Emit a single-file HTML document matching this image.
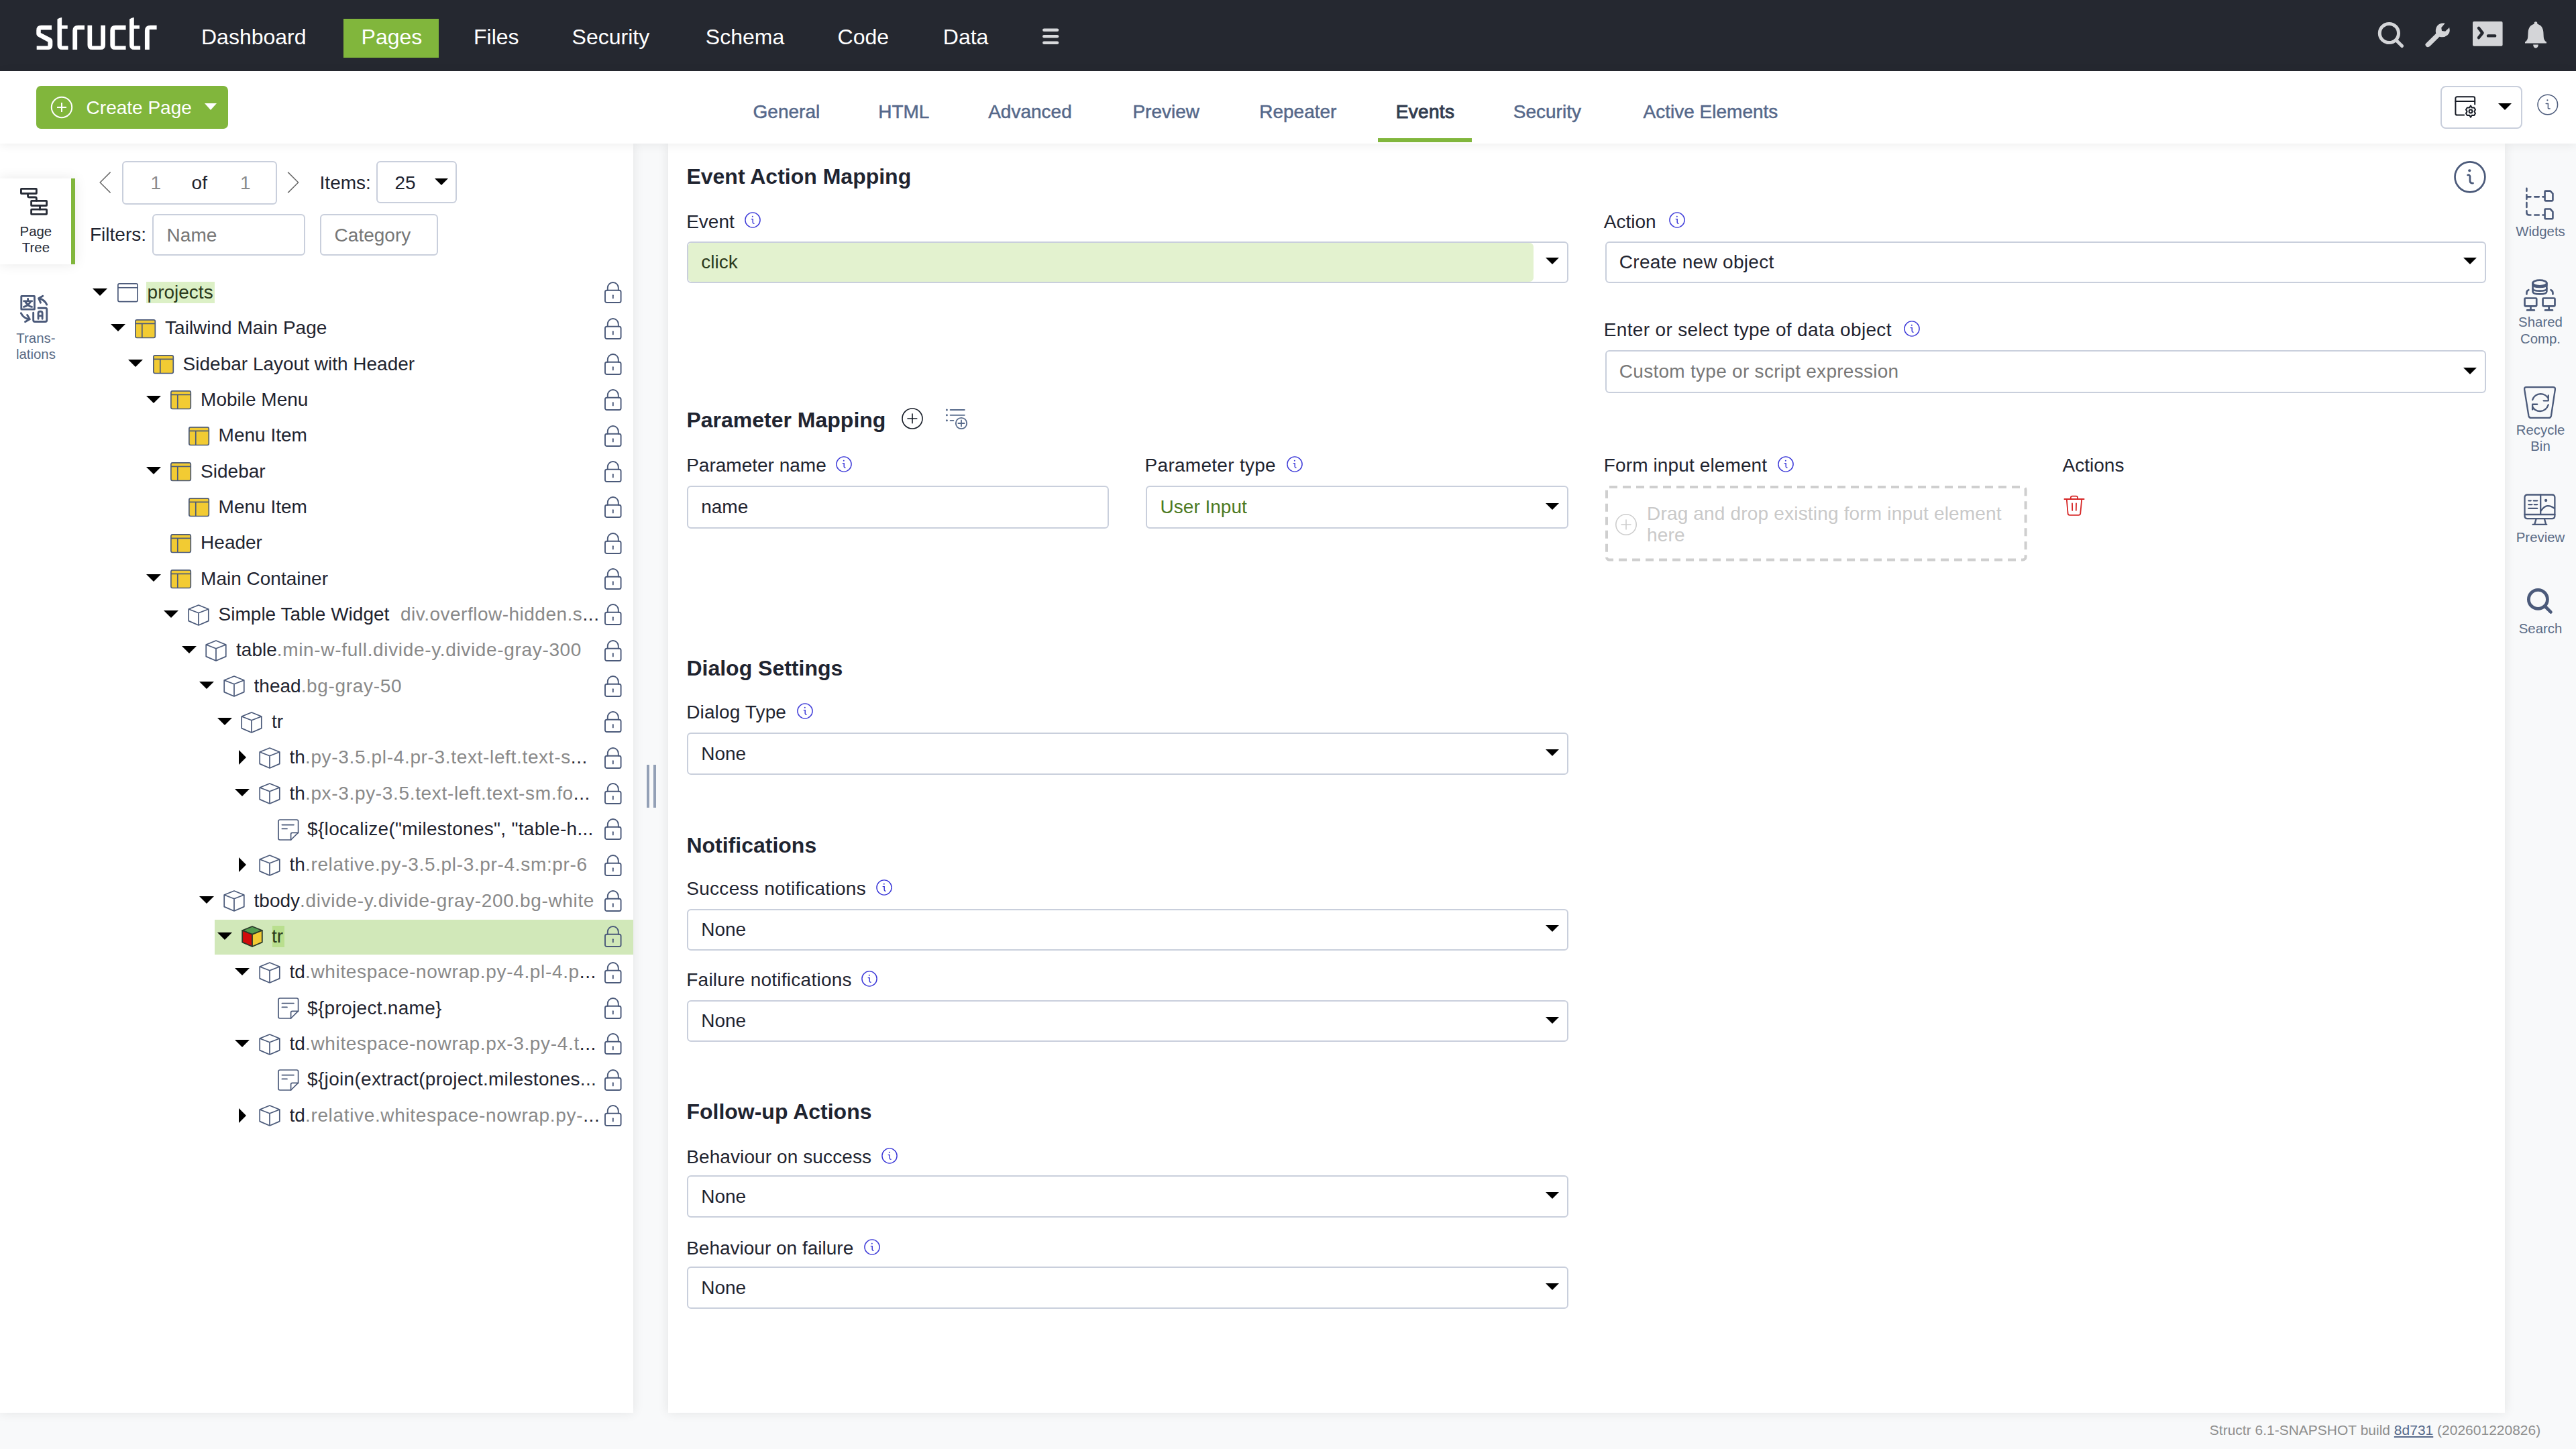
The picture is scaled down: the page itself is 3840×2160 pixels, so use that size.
<!DOCTYPE html>
<html><head><meta charset="utf-8"><style>
*{box-sizing:border-box;margin:0;padding:0}
html,body{width:100%;height:100%;overflow:hidden;background:#f8f9fa}
@media (max-width:2500px){#root{zoom:1!important}}
#root{position:absolute;left:0;top:0;width:1920px;height:1080px;zoom:2;font-family:"Liberation Sans",sans-serif;color:#1f2430;background:#f8f9fa;overflow:hidden}
.a{position:absolute;white-space:nowrap}
svg{position:absolute;overflow:visible}
#hdr{position:absolute;left:0;top:0;width:1920px;height:53px;background:#252830}
.nav{position:absolute;top:14px;height:29px;line-height:27.9px;font-size:16px;color:#fff;padding:0 13.3px}
.nav.act{background:#81b63c}
#sub{position:absolute;left:0;top:53px;width:1920px;height:54px;background:#fff;box-shadow:0 1px 7px rgba(0,0,0,.07);z-index:3}
.tab{position:absolute;top:75px;font-size:14px;color:#55688a;line-height:16px;-webkit-text-stroke:.25px #55688a}
#gap{display:none}
#left{position:absolute;left:0;top:107px;width:472px;height:946px;background:#fff;box-shadow:0 0 8px rgba(0,0,0,.09)}
#main{position:absolute;left:498px;top:107px;width:1369px;height:946px;background:#fff;box-shadow:0 0 8px rgba(0,0,0,.09)}
#rside{display:none}
.lbl{position:absolute;font-size:14px;line-height:16px;color:#1f2430;white-space:nowrap}
.h{position:absolute;font-size:16px;font-weight:bold;line-height:18px;color:#1f2430;white-space:nowrap}
.sel{position:absolute;height:30.6px;border:1px solid #c9cfdc;border-radius:3px;background:#fff;font-size:14px;line-height:28.6px;padding-left:10.5px;color:#1f2430;white-space:nowrap}
.tri{position:absolute;width:0;height:0;border-left:5.5px solid transparent;border-right:5.5px solid transparent;border-top:5.9px solid #000}
.trir{position:absolute;width:0;height:0;border-top:5.5px solid transparent;border-bottom:5.5px solid transparent;border-left:5.6px solid #000}
.tx{position:absolute;font-size:14px;line-height:16px;color:#1f2430;white-space:nowrap;overflow:hidden}
.cls{color:#898989;letter-spacing:.33px}
.sidelbl{position:absolute;font-size:10.2px;line-height:12.1px;text-align:center;color:#5a6b86;white-space:nowrap}
</style></head><body><div id="root">
<div id="hdr"><svg style="left:20px;top:7.5px;width:105px;height:35px" viewBox="0 0 2576 859" preserveAspectRatio="none"><g fill="#fff"><path d="M455,280 H265 Q175,280 175,370 V430 Q175,470 215,492 L385,582 V655 H180 V725 H395 Q470,725 470,645 V570 Q470,528 428,506 L255,418 V362 H455 Z"/><path d="M558,165 Q598,138 640,135 V280 H745 V342 H640 V655 H755 V725 H645 Q558,725 558,640 Z"/><path d="M838,725 V375 Q840,280 940,280 H1055 V360 H922 V725 Z"/><path d="M1110,280 H1192 V655 H1352 V280 H1435 V640 Q1435,725 1350,725 H1195 Q1110,725 1110,640 Z"/><path d="M1810,280 H1620 Q1525,280 1525,375 V640 Q1525,725 1612,725 H1810 V655 H1610 V362 H1810 Z"/><path d="M1878,165 Q1918,138 1960,135 V280 H2060 V342 H1960 V655 H2075 V725 H1965 Q1878,725 1878,640 Z"/><path d="M2158,725 V375 Q2160,280 2260,280 H2375 V355 H2242 V725 Z"/></g></svg>
<div class="nav" style="left:136.7px">Dashboard</div>
<div class="nav act" style="left:256px;width:70.8px">Pages</div>
<div class="nav" style="left:339.7px">Files</div>
<div class="nav" style="left:413px">Security</div>
<div class="nav" style="left:512.6px">Schema</div>
<div class="nav" style="left:611px">Code</div>
<div class="nav" style="left:689.6px">Data</div>
<svg style="left:776.9px;top:20.9px;width:12.2px;height:12.3px" viewBox="0 0 12.2 12.3"><g stroke="#d8d9dc" stroke-width="2.3" stroke-linecap="round"><line x1="1.2" y1="1.4" x2="11" y2="1.4"/><line x1="1.2" y1="6.15" x2="11" y2="6.15"/><line x1="1.2" y1="10.9" x2="11" y2="10.9"/></g></svg>
<svg style="left:1770px;top:14px;width:24px;height:24px" viewBox="0 0 24 24"><g fill="none" stroke="#d4d5d8" stroke-width="2.5" stroke-linecap="round"><circle cx="10.7" cy="10.75" r="7.05"/><line x1="16" y1="16" x2="20.3" y2="20.3"/></g></svg>
<svg style="left:1805px;top:12.5px;width:25px;height:27.5px" viewBox="0 0 1317 1449"><path fill="#d4d5d8" d="M165,1050L560,660Q520,480 610,355Q720,225 915,255L770,430L790,550L925,570L1085,420Q1135,620 1010,725Q880,830 700,785L320,1160Q235,1225 165,1150Q115,1095 165,1050Z"/></svg>
<svg style="left:1843px;top:16px;width:22.5px;height:18.5px" viewBox="0 0 22.5 18.5"><rect x="0" y="0" width="22.3" height="18.4" rx="1" fill="#d4d5d8"/><g fill="none" stroke="#252830" stroke-width="2.2" stroke-linecap="round" stroke-linejoin="round"><polyline points="4.5,4.9 7.3,8.6 4.5,12.1"/><line x1="11.5" y1="10.7" x2="16.6" y2="10.7"/></g></svg>
<svg style="left:1881.5px;top:15.5px;width:17px;height:21px" viewBox="0 0 17 21"><path fill="#d4d5d8" d="M8.5 0.6c.8 0 1.2.6 1.2 1.3v.5c2.8.7 4.3 3 4.5 6.2l.2 3.6c.1 1.5.9 2.9 2.1 3.6v.9H0.5v-.9c1.2-.7 2-2.1 2.1-3.6l.2-3.6C3 5.4 4.5 3.1 7.3 2.4v-.5c0-.7.4-1.3 1.2-1.3zM6.6 17.8h3.8c0 1.4-.85 2.6-1.9 2.6s-1.9-1.2-1.9-2.6z"/></svg>
</div>
<div id="sub"></div>
<div class="a" style="left:27px;top:64.1px;width:143px;height:31.8px;background:#81b63c;border-radius:3.5px;z-index:4"></div>
<svg style="left:37.4px;top:71.4px;width:17px;height:17px;z-index:5" viewBox="0 0 17 17"><g fill="none" stroke="#fff" stroke-width="1"><circle cx="8.5" cy="8.5" r="7.6"/><line x1="5" y1="8.5" x2="12" y2="8.5"/><line x1="8.5" y1="5" x2="8.5" y2="12"/></g></svg>
<div class="a" style="left:64.3px;top:72.4px;font-size:14px;line-height:16px;color:#fff;z-index:5">Create Page</div>
<div class="tri" style="left:152.3px;top:77px;border-top-color:#fff;border-left-width:4.8px;border-right-width:4.8px;border-top-width:5px;z-index:5"></div>
<div class="tab" style="left:561.30px;top:75.6px;z-index:4">General</div>
<div class="tab" style="left:654.60px;top:75.6px;z-index:4">HTML</div>
<div class="tab" style="left:736.60px;top:75.6px;z-index:4">Advanced</div>
<div class="tab" style="left:844.20px;top:75.6px;z-index:4">Preview</div>
<div class="tab" style="left:938.60px;top:75.6px;z-index:4">Repeater</div>
<div class="tab" style="left:1127.90px;top:75.6px;z-index:4">Security</div>
<div class="tab" style="left:1224.80px;top:75.6px;z-index:4">Active Elements</div>
<div class="tab" style="left:1040.4px;top:75.6px;z-index:4;color:#333d50;-webkit-text-stroke:.5px #333d50;font-size:14px;letter-spacing:.15px">Events</div>
<div class="a" style="left:1027px;top:103px;width:70px;height:3px;background:#81b63c;z-index:4"></div>
<div class="a" style="left:1819.2px;top:64.2px;width:60.6px;height:31.6px;border:1px solid #c9cfdc;border-radius:4px;z-index:4"></div>
<svg style="left:1829px;top:71px;width:20px;height:20px;z-index:5" viewBox="0 0 20 20"><g fill="none" stroke="#151a24" stroke-width="1" stroke-linecap="round" stroke-linejoin="round"><path d="M7.6 14.8H2.4a1.2 1.2 0 0 1-1.2-1.2V2.3a1.2 1.2 0 0 1 1.2-1.2h12a1.2 1.2 0 0 1 1.2 1.2v4.5"/><line x1="1.2" y1="4.5" x2="15.6" y2="4.5"/><circle cx="12.5" cy="12" r="1.2"/><path d="M12.5 7.8l.9 1.5 1.7-.1.9 1.5-.8 1.4.8 1.4-.9 1.5-1.7-.1-.9 1.5-.9-1.5-1.7.1-.9-1.5.8-1.4-.8-1.4.9-1.5 1.7.1z"/></g></svg>
<div class="tri" style="left:1862px;top:77px;border-left-width:5px;border-right-width:5px;border-top-width:5px;z-index:5"></div>
<svg style="left:1890px;top:69px;width:18px;height:18px;z-index:5" viewBox="0 0 18 18"><g fill="none" stroke="#4b5a7a" stroke-width="0.75" stroke-linecap="round"><circle cx="8.9" cy="9" r="7.4"/><path d="M7.6 8.2H9.2V11.6Q9.2 12 10.6 12"/></g><circle cx="8.7" cy="5.7" r="0.55" fill="#4b5a7a"/></svg>
<div id="left"></div><div id="gap"></div><div id="main"></div><div id="rside"></div>
<div class="a" style="left:482px;top:570px;width:2px;height:32px;background:#93a0b6"></div>
<div class="a" style="left:486.8px;top:570px;width:2px;height:32px;background:#93a0b6"></div>
<div class="a" style="left:0;top:132.9px;width:56px;height:64px;background:#fff;box-shadow:0 0 9px rgba(0,0,0,.09)"></div>
<div class="a" style="left:53px;top:132.9px;width:3px;height:64px;background:#81b63c"></div>
<svg style="left:10px;top:135px;width:30px;height:30px" viewBox="0 0 1449 1449"><g fill="none" stroke="#262b36" stroke-width="68" stroke-linecap="round" stroke-linejoin="round"><rect x="276" y="273" width="554" height="174" rx="14"/><rect x="643" y="708" width="554" height="174" rx="14"/><rect x="643" y="1018" width="554" height="174" rx="14"/><path d="M520,447V540Q520,580 560,580H780Q830,580 830,630V708M955,882V1018"/></g></svg>
<div class="sidelbl" style="left:0;width:53.4px;top:166.4px;color:#262b36">Page<br>Tree</div>
<svg style="left:0px;top:200px;width:50px;height:80px" viewBox="0 0 906 1449"><g fill="none" stroke="#4b5a7a" stroke-width="26" stroke-linecap="round" stroke-linejoin="round"><rect x="288" y="375" width="178" height="178" rx="4"/><path d="M322,442H432M377,412V442M345,455Q375,510 430,520M410,455Q380,505 322,520"/><path d="M522,405Q600,420 632,490M522,405L578,373M522,405L548,463"/><path d="M450,600V700Q450,720 470,720H612Q632,720 632,700V555Q632,537 612,537H517"/><path d="M517,682V605Q517,582 545,582Q572,582 572,605V682M517,642H572"/><path d="M284,605Q320,680 402,687M402,687L340,722M402,687L368,630"/></g></svg>
<div class="sidelbl" style="left:0;width:53.4px;top:246px">Trans-<br>lations</div>
<svg style="left:74px;top:128px;width:9px;height:16px" viewBox="0 0 9 16"><polyline points="8.3,0.3 0.6,8 8.3,15.7" fill="none" stroke="#6b6b6b" stroke-width=".75"/></svg>
<div class="a" style="left:91.2px;top:120.2px;width:115.5px;height:32.3px;border:1px solid #c9cfdc;border-radius:3px"></div>
<div class="lbl" style="left:112.2px;top:128.6px;color:#8a8a8a">1</div>
<div class="lbl" style="left:142.8px;top:128.6px">of</div>
<div class="lbl" style="left:179px;top:128.6px;color:#8a8a8a">1</div>
<svg style="left:214px;top:128px;width:9px;height:16px" viewBox="0 0 9 16"><polyline points="0.6,0.3 8.3,8 0.6,15.7" fill="none" stroke="#6b6b6b" stroke-width=".75"/></svg>
<div class="lbl" style="left:238.3px;top:128.6px">Items:</div>
<div class="a" style="left:280.3px;top:120.2px;width:60.4px;height:31.4px;border:1px solid #c9cfdc;border-radius:3px"></div>
<div class="lbl" style="left:294.2px;top:128.6px">25</div>
<div class="tri" style="left:324px;top:133px;border-left-width:5px;border-right-width:5px;border-top-width:5.2px"></div>
<div class="lbl" style="left:67px;top:166.9px">Filters:</div>
<div class="a" style="left:113.3px;top:159.3px;width:114.3px;height:31.2px;border:1px solid #c9cfdc;border-radius:3px"></div>
<div class="lbl" style="left:124.3px;top:167.3px;color:#777">Name</div>
<div class="a" style="left:238.3px;top:159.3px;width:88.4px;height:31.2px;border:1px solid #c9cfdc;border-radius:3px"></div>
<div class="lbl" style="left:249.3px;top:167.3px;color:#777">Category</div>
<div class="tri" style="left:69.20px;top:214.90px"></div>
<svg style="left:87.6px;top:210.80349999999999px;width:16px;height:16px" viewBox="0 0 16 16"><g fill="#fff" stroke="#4b5a7a" stroke-width="0.85"><rect x="0.45" y="0.45" width="14.6" height="13.4" rx="1.1"/><line x1="0.45" y1="3.4" x2="15.05" y2="3.4"/></g></svg>
<div class="a" style="left:109.00px;top:209.97px;width:51px;height:16px;background:#dcf0c6"></div>
<div class="tx" style="left:109.80px;top:210.02px;color:#2c3a1c">projects</div>
<svg style="left:450.6px;top:210.10349999999997px;width:13px;height:16px" viewBox="0 0 13 16"><g fill="none" stroke="#4b5a7a" stroke-width="0.95" stroke-linecap="round"><rect x="0.5" y="6.4" width="11.8" height="9.1" rx="1.3"/><path d="M2.4 6.4V4.5a4 4 0 0 1 8 0v1.9"/><line x1="6.4" y1="10.1" x2="6.4" y2="12.2"/></g></svg>
<div class="tri" style="left:82.45px;top:241.57px"></div>
<svg style="left:100.55px;top:237.87050000000002px;width:16px;height:16px" viewBox="0 0 16 16"><g stroke="#4b5a7a" stroke-width="0.85"><rect x="0.45" y="0.45" width="14.7" height="13.3" rx="1.1" fill="#f2cb33"/><line x1="0.45" y1="3.2" x2="15.15" y2="3.2"/><line x1="5.4" y1="3.2" x2="5.4" y2="13.75"/></g></svg>
<div class="tx" style="left:123.05px;top:236.69px;width:323.95px">Tailwind Main Page</div>
<svg style="left:450.6px;top:236.7705px;width:13px;height:16px" viewBox="0 0 13 16"><g fill="none" stroke="#4b5a7a" stroke-width="0.95" stroke-linecap="round"><rect x="0.5" y="6.4" width="11.8" height="9.1" rx="1.3"/><path d="M2.4 6.4V4.5a4 4 0 0 1 8 0v1.9"/><line x1="6.4" y1="10.1" x2="6.4" y2="12.2"/></g></svg>
<div class="tri" style="left:95.70px;top:268.24px"></div>
<svg style="left:113.8px;top:264.5375px;width:16px;height:16px" viewBox="0 0 16 16"><g stroke="#4b5a7a" stroke-width="0.85"><rect x="0.45" y="0.45" width="14.7" height="13.3" rx="1.1" fill="#f2cb33"/><line x1="0.45" y1="3.2" x2="15.15" y2="3.2"/><line x1="5.4" y1="3.2" x2="5.4" y2="13.75"/></g></svg>
<div class="tx" style="left:136.30px;top:263.35px;width:310.70px">Sidebar Layout with Header</div>
<svg style="left:450.6px;top:263.43750000000006px;width:13px;height:16px" viewBox="0 0 13 16"><g fill="none" stroke="#4b5a7a" stroke-width="0.95" stroke-linecap="round"><rect x="0.5" y="6.4" width="11.8" height="9.1" rx="1.3"/><path d="M2.4 6.4V4.5a4 4 0 0 1 8 0v1.9"/><line x1="6.4" y1="10.1" x2="6.4" y2="12.2"/></g></svg>
<div class="tri" style="left:108.95px;top:294.90px"></div>
<svg style="left:127.05px;top:291.2045px;width:16px;height:16px" viewBox="0 0 16 16"><g stroke="#4b5a7a" stroke-width="0.85"><rect x="0.45" y="0.45" width="14.7" height="13.3" rx="1.1" fill="#f2cb33"/><line x1="0.45" y1="3.2" x2="15.15" y2="3.2"/><line x1="5.4" y1="3.2" x2="5.4" y2="13.75"/></g></svg>
<div class="tx" style="left:149.55px;top:290.02px;width:297.45px">Mobile Menu</div>
<svg style="left:450.6px;top:290.10450000000003px;width:13px;height:16px" viewBox="0 0 13 16"><g fill="none" stroke="#4b5a7a" stroke-width="0.95" stroke-linecap="round"><rect x="0.5" y="6.4" width="11.8" height="9.1" rx="1.3"/><path d="M2.4 6.4V4.5a4 4 0 0 1 8 0v1.9"/><line x1="6.4" y1="10.1" x2="6.4" y2="12.2"/></g></svg>
<svg style="left:140.29999999999998px;top:317.87149999999997px;width:16px;height:16px" viewBox="0 0 16 16"><g stroke="#4b5a7a" stroke-width="0.85"><rect x="0.45" y="0.45" width="14.7" height="13.3" rx="1.1" fill="#f2cb33"/><line x1="0.45" y1="3.2" x2="15.15" y2="3.2"/><line x1="5.4" y1="3.2" x2="5.4" y2="13.75"/></g></svg>
<div class="tx" style="left:162.80px;top:316.69px;width:284.20px">Menu Item</div>
<svg style="left:450.6px;top:316.7715px;width:13px;height:16px" viewBox="0 0 13 16"><g fill="none" stroke="#4b5a7a" stroke-width="0.95" stroke-linecap="round"><rect x="0.5" y="6.4" width="11.8" height="9.1" rx="1.3"/><path d="M2.4 6.4V4.5a4 4 0 0 1 8 0v1.9"/><line x1="6.4" y1="10.1" x2="6.4" y2="12.2"/></g></svg>
<div class="tri" style="left:108.95px;top:348.24px"></div>
<svg style="left:127.05px;top:344.5385px;width:16px;height:16px" viewBox="0 0 16 16"><g stroke="#4b5a7a" stroke-width="0.85"><rect x="0.45" y="0.45" width="14.7" height="13.3" rx="1.1" fill="#f2cb33"/><line x1="0.45" y1="3.2" x2="15.15" y2="3.2"/><line x1="5.4" y1="3.2" x2="5.4" y2="13.75"/></g></svg>
<div class="tx" style="left:149.55px;top:343.36px;width:297.45px">Sidebar</div>
<svg style="left:450.6px;top:343.43850000000003px;width:13px;height:16px" viewBox="0 0 13 16"><g fill="none" stroke="#4b5a7a" stroke-width="0.95" stroke-linecap="round"><rect x="0.5" y="6.4" width="11.8" height="9.1" rx="1.3"/><path d="M2.4 6.4V4.5a4 4 0 0 1 8 0v1.9"/><line x1="6.4" y1="10.1" x2="6.4" y2="12.2"/></g></svg>
<svg style="left:140.29999999999998px;top:371.20550000000003px;width:16px;height:16px" viewBox="0 0 16 16"><g stroke="#4b5a7a" stroke-width="0.85"><rect x="0.45" y="0.45" width="14.7" height="13.3" rx="1.1" fill="#f2cb33"/><line x1="0.45" y1="3.2" x2="15.15" y2="3.2"/><line x1="5.4" y1="3.2" x2="5.4" y2="13.75"/></g></svg>
<div class="tx" style="left:162.80px;top:370.02px;width:284.20px">Menu Item</div>
<svg style="left:450.6px;top:370.10550000000006px;width:13px;height:16px" viewBox="0 0 13 16"><g fill="none" stroke="#4b5a7a" stroke-width="0.95" stroke-linecap="round"><rect x="0.5" y="6.4" width="11.8" height="9.1" rx="1.3"/><path d="M2.4 6.4V4.5a4 4 0 0 1 8 0v1.9"/><line x1="6.4" y1="10.1" x2="6.4" y2="12.2"/></g></svg>
<svg style="left:127.05px;top:397.8725px;width:16px;height:16px" viewBox="0 0 16 16"><g stroke="#4b5a7a" stroke-width="0.85"><rect x="0.45" y="0.45" width="14.7" height="13.3" rx="1.1" fill="#f2cb33"/><line x1="0.45" y1="3.2" x2="15.15" y2="3.2"/><line x1="5.4" y1="3.2" x2="5.4" y2="13.75"/></g></svg>
<div class="tx" style="left:149.55px;top:396.69px;width:297.45px">Header</div>
<svg style="left:450.6px;top:396.77250000000004px;width:13px;height:16px" viewBox="0 0 13 16"><g fill="none" stroke="#4b5a7a" stroke-width="0.95" stroke-linecap="round"><rect x="0.5" y="6.4" width="11.8" height="9.1" rx="1.3"/><path d="M2.4 6.4V4.5a4 4 0 0 1 8 0v1.9"/><line x1="6.4" y1="10.1" x2="6.4" y2="12.2"/></g></svg>
<div class="tri" style="left:108.95px;top:428.24px"></div>
<svg style="left:127.05px;top:424.5395px;width:16px;height:16px" viewBox="0 0 16 16"><g stroke="#4b5a7a" stroke-width="0.85"><rect x="0.45" y="0.45" width="14.7" height="13.3" rx="1.1" fill="#f2cb33"/><line x1="0.45" y1="3.2" x2="15.15" y2="3.2"/><line x1="5.4" y1="3.2" x2="5.4" y2="13.75"/></g></svg>
<div class="tx" style="left:149.55px;top:423.36px;width:297.45px">Main Container</div>
<svg style="left:450.6px;top:423.4395px;width:13px;height:16px" viewBox="0 0 13 16"><g fill="none" stroke="#4b5a7a" stroke-width="0.95" stroke-linecap="round"><rect x="0.5" y="6.4" width="11.8" height="9.1" rx="1.3"/><path d="M2.4 6.4V4.5a4 4 0 0 1 8 0v1.9"/><line x1="6.4" y1="10.1" x2="6.4" y2="12.2"/></g></svg>
<div class="tri" style="left:122.20px;top:454.91px"></div>
<svg style="left:139.9px;top:450.35650000000004px;width:16px;height:16px" viewBox="0 0 16 16"><g fill="none" stroke="#4b5a7a" stroke-width="0.85" stroke-linejoin="round"><path d="M8 0.5L15.4 3.5V12.3L8 15.5L0.6 12.3V3.5Z"/><path d="M0.6 3.5L8 6.4L15.4 3.5M8 6.4V15.5"/></g></svg>
<div class="tx" style="left:162.80px;top:450.02px;width:284.20px">Simple Table Widget<span class="cls" style="letter-spacing:.25px;margin-left:8.3px">div.overflow-hidden.s</span><span style="letter-spacing:.3px">...</span></div>
<svg style="left:450.6px;top:450.10650000000004px;width:13px;height:16px" viewBox="0 0 13 16"><g fill="none" stroke="#4b5a7a" stroke-width="0.95" stroke-linecap="round"><rect x="0.5" y="6.4" width="11.8" height="9.1" rx="1.3"/><path d="M2.4 6.4V4.5a4 4 0 0 1 8 0v1.9"/><line x1="6.4" y1="10.1" x2="6.4" y2="12.2"/></g></svg>
<div class="tri" style="left:135.45px;top:481.57px"></div>
<svg style="left:153.15px;top:477.02350000000007px;width:16px;height:16px" viewBox="0 0 16 16"><g fill="none" stroke="#4b5a7a" stroke-width="0.85" stroke-linejoin="round"><path d="M8 0.5L15.4 3.5V12.3L8 15.5L0.6 12.3V3.5Z"/><path d="M0.6 3.5L8 6.4L15.4 3.5M8 6.4V15.5"/></g></svg>
<div class="tx" style="left:176.05px;top:476.69px;width:270.95px">table<span class="cls">.min-w-full.divide-y.divide-gray-300</span></div>
<svg style="left:450.6px;top:476.77350000000007px;width:13px;height:16px" viewBox="0 0 13 16"><g fill="none" stroke="#4b5a7a" stroke-width="0.95" stroke-linecap="round"><rect x="0.5" y="6.4" width="11.8" height="9.1" rx="1.3"/><path d="M2.4 6.4V4.5a4 4 0 0 1 8 0v1.9"/><line x1="6.4" y1="10.1" x2="6.4" y2="12.2"/></g></svg>
<div class="tri" style="left:148.70px;top:508.24px"></div>
<svg style="left:166.4px;top:503.6905px;width:16px;height:16px" viewBox="0 0 16 16"><g fill="none" stroke="#4b5a7a" stroke-width="0.85" stroke-linejoin="round"><path d="M8 0.5L15.4 3.5V12.3L8 15.5L0.6 12.3V3.5Z"/><path d="M0.6 3.5L8 6.4L15.4 3.5M8 6.4V15.5"/></g></svg>
<div class="tx" style="left:189.30px;top:503.36px;width:257.70px">thead<span class="cls">.bg-gray-50</span></div>
<svg style="left:450.6px;top:503.4405px;width:13px;height:16px" viewBox="0 0 13 16"><g fill="none" stroke="#4b5a7a" stroke-width="0.95" stroke-linecap="round"><rect x="0.5" y="6.4" width="11.8" height="9.1" rx="1.3"/><path d="M2.4 6.4V4.5a4 4 0 0 1 8 0v1.9"/><line x1="6.4" y1="10.1" x2="6.4" y2="12.2"/></g></svg>
<div class="tri" style="left:161.95px;top:534.91px"></div>
<svg style="left:179.65px;top:530.3574999999998px;width:16px;height:16px" viewBox="0 0 16 16"><g fill="none" stroke="#4b5a7a" stroke-width="0.85" stroke-linejoin="round"><path d="M8 0.5L15.4 3.5V12.3L8 15.5L0.6 12.3V3.5Z"/><path d="M0.6 3.5L8 6.4L15.4 3.5M8 6.4V15.5"/></g></svg>
<div class="tx" style="left:202.55px;top:530.02px;width:244.45px">tr</div>
<svg style="left:450.6px;top:530.1075px;width:13px;height:16px" viewBox="0 0 13 16"><g fill="none" stroke="#4b5a7a" stroke-width="0.95" stroke-linecap="round"><rect x="0.5" y="6.4" width="11.8" height="9.1" rx="1.3"/><path d="M2.4 6.4V4.5a4 4 0 0 1 8 0v1.9"/><line x1="6.4" y1="10.1" x2="6.4" y2="12.2"/></g></svg>
<div class="trir" style="left:178.10px;top:559.17px"></div>
<svg style="left:192.9px;top:557.0244999999999px;width:16px;height:16px" viewBox="0 0 16 16"><g fill="none" stroke="#4b5a7a" stroke-width="0.85" stroke-linejoin="round"><path d="M8 0.5L15.4 3.5V12.3L8 15.5L0.6 12.3V3.5Z"/><path d="M0.6 3.5L8 6.4L15.4 3.5M8 6.4V15.5"/></g></svg>
<div class="tx" style="left:215.80px;top:556.69px;width:231.20px">th<span class="cls">.py-3.5.pl-4.pr-3.text-left.text-s</span><span style="letter-spacing:.3px">...</span></div>
<svg style="left:450.6px;top:556.7745px;width:13px;height:16px" viewBox="0 0 13 16"><g fill="none" stroke="#4b5a7a" stroke-width="0.95" stroke-linecap="round"><rect x="0.5" y="6.4" width="11.8" height="9.1" rx="1.3"/><path d="M2.4 6.4V4.5a4 4 0 0 1 8 0v1.9"/><line x1="6.4" y1="10.1" x2="6.4" y2="12.2"/></g></svg>
<div class="tri" style="left:175.20px;top:588.24px"></div>
<svg style="left:192.9px;top:583.6914999999999px;width:16px;height:16px" viewBox="0 0 16 16"><g fill="none" stroke="#4b5a7a" stroke-width="0.85" stroke-linejoin="round"><path d="M8 0.5L15.4 3.5V12.3L8 15.5L0.6 12.3V3.5Z"/><path d="M0.6 3.5L8 6.4L15.4 3.5M8 6.4V15.5"/></g></svg>
<div class="tx" style="left:215.80px;top:583.36px;width:231.20px">th<span class="cls">.px-3.py-3.5.text-left.text-sm.fo</span><span style="letter-spacing:.3px">...</span></div>
<svg style="left:450.6px;top:583.4415px;width:13px;height:16px" viewBox="0 0 13 16"><g fill="none" stroke="#4b5a7a" stroke-width="0.95" stroke-linecap="round"><rect x="0.5" y="6.4" width="11.8" height="9.1" rx="1.3"/><path d="M2.4 6.4V4.5a4 4 0 0 1 8 0v1.9"/><line x1="6.4" y1="10.1" x2="6.4" y2="12.2"/></g></svg>
<svg style="left:207.15px;top:610.4084999999999px;width:16px;height:16px" viewBox="0 0 16 16"><g fill="none" stroke="#4b5a7a" stroke-width="0.85" stroke-linejoin="round" stroke-linecap="round"><path d="M15.3 10.1V1.6a1.1 1.1 0 0 0-1.1-1.1H1.6A1.1 1.1 0 0 0 0.5 1.6v12.8a1.1 1.1 0 0 0 1.1 1.1h8.2z"/><path d="M9.8 15.5v-4.2a1.1 1.1 0 0 1 1.1-1.1h4.4"/><line x1="3.2" y1="4.3" x2="12" y2="4.3"/><line x1="3.2" y1="7.2" x2="7" y2="7.2"/></g></svg>
<div class="tx" style="left:229.05px;top:610.02px;width:217.95px;letter-spacing:.15px">${localize(&quot;milestones&quot;, &quot;table-h...</div>
<svg style="left:450.6px;top:610.1084999999999px;width:13px;height:16px" viewBox="0 0 13 16"><g fill="none" stroke="#4b5a7a" stroke-width="0.95" stroke-linecap="round"><rect x="0.5" y="6.4" width="11.8" height="9.1" rx="1.3"/><path d="M2.4 6.4V4.5a4 4 0 0 1 8 0v1.9"/><line x1="6.4" y1="10.1" x2="6.4" y2="12.2"/></g></svg>
<div class="trir" style="left:178.10px;top:639.18px"></div>
<svg style="left:192.9px;top:637.0254999999999px;width:16px;height:16px" viewBox="0 0 16 16"><g fill="none" stroke="#4b5a7a" stroke-width="0.85" stroke-linejoin="round"><path d="M8 0.5L15.4 3.5V12.3L8 15.5L0.6 12.3V3.5Z"/><path d="M0.6 3.5L8 6.4L15.4 3.5M8 6.4V15.5"/></g></svg>
<div class="tx" style="left:215.80px;top:636.69px;width:231.20px">th<span class="cls">.relative.py-3.5.pl-3.pr-4.sm:pr-6</span></div>
<svg style="left:450.6px;top:636.7755px;width:13px;height:16px" viewBox="0 0 13 16"><g fill="none" stroke="#4b5a7a" stroke-width="0.95" stroke-linecap="round"><rect x="0.5" y="6.4" width="11.8" height="9.1" rx="1.3"/><path d="M2.4 6.4V4.5a4 4 0 0 1 8 0v1.9"/><line x1="6.4" y1="10.1" x2="6.4" y2="12.2"/></g></svg>
<div class="tri" style="left:148.70px;top:668.24px"></div>
<svg style="left:166.4px;top:663.6924999999999px;width:16px;height:16px" viewBox="0 0 16 16"><g fill="none" stroke="#4b5a7a" stroke-width="0.85" stroke-linejoin="round"><path d="M8 0.5L15.4 3.5V12.3L8 15.5L0.6 12.3V3.5Z"/><path d="M0.6 3.5L8 6.4L15.4 3.5M8 6.4V15.5"/></g></svg>
<div class="tx" style="left:189.30px;top:663.36px;width:257.70px">tbody<span class="cls">.divide-y.divide-gray-200.bg-white</span></div>
<svg style="left:450.6px;top:663.4425px;width:13px;height:16px" viewBox="0 0 13 16"><g fill="none" stroke="#4b5a7a" stroke-width="0.95" stroke-linecap="round"><rect x="0.5" y="6.4" width="11.8" height="9.1" rx="1.3"/><path d="M2.4 6.4V4.5a4 4 0 0 1 8 0v1.9"/><line x1="6.4" y1="10.1" x2="6.4" y2="12.2"/></g></svg>
<div class="a" style="left:160px;top:685.68px;width:312px;height:25.7px;background:#d1e8b9"></div>
<div class="tri" style="left:161.95px;top:694.91px"></div>
<svg style="left:180.04999999999998px;top:690.0095px;width:16px;height:16px" viewBox="0 0 16 16"><g stroke="#2b3a2a" stroke-width="0.9" stroke-linejoin="round"><path d="M8 0.5L15.4 3.5L8 6.4L0.6 3.5Z" fill="#529b4e"/><path d="M0.6 3.5L8 6.4V15.5L0.6 12.3Z" fill="#d10c0c"/><path d="M15.4 3.5L8 6.4V15.5L15.4 12.3Z" fill="#f2cb33"/></g></svg>
<div class="a" style="left:202.85px;top:689.98px;width:9px;height:16px;background:#b9df8e"></div>
<div class="tx" style="left:202.55px;top:690.03px;color:#2c3a1c">tr</div>
<svg style="left:450.6px;top:690.1095px;width:13px;height:16px" viewBox="0 0 13 16"><g fill="none" stroke="#4b5a7a" stroke-width="0.95" stroke-linecap="round"><rect x="0.5" y="6.4" width="11.8" height="9.1" rx="1.3"/><path d="M2.4 6.4V4.5a4 4 0 0 1 8 0v1.9"/><line x1="6.4" y1="10.1" x2="6.4" y2="12.2"/></g></svg>
<div class="tri" style="left:175.20px;top:721.58px"></div>
<svg style="left:192.9px;top:717.0264999999998px;width:16px;height:16px" viewBox="0 0 16 16"><g fill="none" stroke="#4b5a7a" stroke-width="0.85" stroke-linejoin="round"><path d="M8 0.5L15.4 3.5V12.3L8 15.5L0.6 12.3V3.5Z"/><path d="M0.6 3.5L8 6.4L15.4 3.5M8 6.4V15.5"/></g></svg>
<div class="tx" style="left:215.80px;top:716.69px;width:231.20px">td<span class="cls">.whitespace-nowrap.py-4.pl-4.p</span><span style="letter-spacing:.3px">...</span></div>
<svg style="left:450.6px;top:716.7764999999999px;width:13px;height:16px" viewBox="0 0 13 16"><g fill="none" stroke="#4b5a7a" stroke-width="0.95" stroke-linecap="round"><rect x="0.5" y="6.4" width="11.8" height="9.1" rx="1.3"/><path d="M2.4 6.4V4.5a4 4 0 0 1 8 0v1.9"/><line x1="6.4" y1="10.1" x2="6.4" y2="12.2"/></g></svg>
<svg style="left:207.15px;top:743.7434999999999px;width:16px;height:16px" viewBox="0 0 16 16"><g fill="none" stroke="#4b5a7a" stroke-width="0.85" stroke-linejoin="round" stroke-linecap="round"><path d="M15.3 10.1V1.6a1.1 1.1 0 0 0-1.1-1.1H1.6A1.1 1.1 0 0 0 0.5 1.6v12.8a1.1 1.1 0 0 0 1.1 1.1h8.2z"/><path d="M9.8 15.5v-4.2a1.1 1.1 0 0 1 1.1-1.1h4.4"/><line x1="3.2" y1="4.3" x2="12" y2="4.3"/><line x1="3.2" y1="7.2" x2="7" y2="7.2"/></g></svg>
<div class="tx" style="left:229.05px;top:743.36px;width:217.95px;letter-spacing:.15px">${project.name}</div>
<svg style="left:450.6px;top:743.4435px;width:13px;height:16px" viewBox="0 0 13 16"><g fill="none" stroke="#4b5a7a" stroke-width="0.95" stroke-linecap="round"><rect x="0.5" y="6.4" width="11.8" height="9.1" rx="1.3"/><path d="M2.4 6.4V4.5a4 4 0 0 1 8 0v1.9"/><line x1="6.4" y1="10.1" x2="6.4" y2="12.2"/></g></svg>
<div class="tri" style="left:175.20px;top:774.91px"></div>
<svg style="left:192.9px;top:770.3604999999999px;width:16px;height:16px" viewBox="0 0 16 16"><g fill="none" stroke="#4b5a7a" stroke-width="0.85" stroke-linejoin="round"><path d="M8 0.5L15.4 3.5V12.3L8 15.5L0.6 12.3V3.5Z"/><path d="M0.6 3.5L8 6.4L15.4 3.5M8 6.4V15.5"/></g></svg>
<div class="tx" style="left:215.80px;top:770.03px;width:231.20px">td<span class="cls">.whitespace-nowrap.px-3.py-4.t</span><span style="letter-spacing:.3px">...</span></div>
<svg style="left:450.6px;top:770.1105px;width:13px;height:16px" viewBox="0 0 13 16"><g fill="none" stroke="#4b5a7a" stroke-width="0.95" stroke-linecap="round"><rect x="0.5" y="6.4" width="11.8" height="9.1" rx="1.3"/><path d="M2.4 6.4V4.5a4 4 0 0 1 8 0v1.9"/><line x1="6.4" y1="10.1" x2="6.4" y2="12.2"/></g></svg>
<svg style="left:207.15px;top:797.0774999999999px;width:16px;height:16px" viewBox="0 0 16 16"><g fill="none" stroke="#4b5a7a" stroke-width="0.85" stroke-linejoin="round" stroke-linecap="round"><path d="M15.3 10.1V1.6a1.1 1.1 0 0 0-1.1-1.1H1.6A1.1 1.1 0 0 0 0.5 1.6v12.8a1.1 1.1 0 0 0 1.1 1.1h8.2z"/><path d="M9.8 15.5v-4.2a1.1 1.1 0 0 1 1.1-1.1h4.4"/><line x1="3.2" y1="4.3" x2="12" y2="4.3"/><line x1="3.2" y1="7.2" x2="7" y2="7.2"/></g></svg>
<div class="tx" style="left:229.05px;top:796.69px;width:217.95px;letter-spacing:.15px">${join(extract(project.milestones...</div>
<svg style="left:450.6px;top:796.7774999999999px;width:13px;height:16px" viewBox="0 0 13 16"><g fill="none" stroke="#4b5a7a" stroke-width="0.95" stroke-linecap="round"><rect x="0.5" y="6.4" width="11.8" height="9.1" rx="1.3"/><path d="M2.4 6.4V4.5a4 4 0 0 1 8 0v1.9"/><line x1="6.4" y1="10.1" x2="6.4" y2="12.2"/></g></svg>
<div class="trir" style="left:178.10px;top:825.84px"></div>
<svg style="left:192.9px;top:823.6944999999998px;width:16px;height:16px" viewBox="0 0 16 16"><g fill="none" stroke="#4b5a7a" stroke-width="0.85" stroke-linejoin="round"><path d="M8 0.5L15.4 3.5V12.3L8 15.5L0.6 12.3V3.5Z"/><path d="M0.6 3.5L8 6.4L15.4 3.5M8 6.4V15.5"/></g></svg>
<div class="tx" style="left:215.80px;top:823.36px;width:231.20px">td<span class="cls">.relative.whitespace-nowrap.py-</span><span style="letter-spacing:.3px">...</span></div>
<svg style="left:450.6px;top:823.4445px;width:13px;height:16px" viewBox="0 0 13 16"><g fill="none" stroke="#4b5a7a" stroke-width="0.95" stroke-linecap="round"><rect x="0.5" y="6.4" width="11.8" height="9.1" rx="1.3"/><path d="M2.4 6.4V4.5a4 4 0 0 1 8 0v1.9"/><line x1="6.4" y1="10.1" x2="6.4" y2="12.2"/></g></svg>
<div class="h" style="left:511.70px;top:122.45px">Event Action Mapping</div>
<svg style="left:1825px;top:115px;width:35px;height:32.5px" viewBox="0 0 1560 1449"><g fill="none" stroke="#4b5a7a" stroke-width="60" stroke-linecap="round"><circle cx="712" cy="755" r="500"/><path d="M635,690Q690,672 712,725V880Q712,960 800,960H815"/></g><circle cx="697" cy="540" r="46" fill="#4b5a7a"/></svg>
<div class="lbl" style="left:511.60px;top:157.25px">Event</div><svg style="left:554.00px;top:157.20px;width:14px;height:14px" viewBox="0 0 14 14"><g fill="none" stroke="#3b38d8" stroke-width="0.72" stroke-linecap="round"><circle cx="7" cy="7" r="5.55"/><path d="M6.1 6.3H7.1V8.8Q7.1 9.6 8 9.6"/></g><circle cx="6.9" cy="4.4" r="0.5" fill="#3b38d8"/></svg>
<div class="sel" style="left:512px;top:180px;width:656.90px;height:30.90px"></div><div class="a" style="left:513px;top:181px;width:630.00px;height:28.90px;background:#e3f2cf;border-radius:2.5px 3px 3px 2.5px"></div><div class="lbl" style="left:522.60px;top:187.60px;color:#2c3a1c">click</div><div class="tri" style="left:1152.00px;top:192.15px;border-left-width:5px;border-right-width:5px;border-top-width:5px"></div>
<div class="lbl" style="left:1195.40px;top:157.25px">Action</div><svg style="left:1242.90px;top:157.20px;width:14px;height:14px" viewBox="0 0 14 14"><g fill="none" stroke="#3b38d8" stroke-width="0.72" stroke-linecap="round"><circle cx="7" cy="7" r="5.55"/><path d="M6.1 6.3H7.1V8.8Q7.1 9.6 8 9.6"/></g><circle cx="6.9" cy="4.4" r="0.5" fill="#3b38d8"/></svg>
<div class="sel" style="left:1196.3px;top:180px;width:656.70px;height:30.90px"></div><div class="lbl" style="left:1206.90px;top:187.60px;color:#1f2430"><span style="letter-spacing:.15px">Create new object</span></div><div class="tri" style="left:1836.10px;top:192.15px;border-left-width:5px;border-right-width:5px;border-top-width:5px"></div>
<div class="lbl" style="left:1195.40px;top:238.15px"><span style="letter-spacing:.17px">Enter or select type of data object</span></div><svg style="left:1417.90px;top:238.10px;width:14px;height:14px" viewBox="0 0 14 14"><g fill="none" stroke="#3b38d8" stroke-width="0.72" stroke-linecap="round"><circle cx="7" cy="7" r="5.55"/><path d="M6.1 6.3H7.1V8.8Q7.1 9.6 8 9.6"/></g><circle cx="6.9" cy="4.4" r="0.5" fill="#3b38d8"/></svg>
<div class="sel" style="left:1196.3px;top:261.2px;width:656.70px;height:31.70px"></div><div class="lbl" style="left:1206.90px;top:268.80px;color:#777"><span style="letter-spacing:.14px">Custom type or script expression</span></div><div class="tri" style="left:1836.10px;top:273.75px;border-left-width:5px;border-right-width:5px;border-top-width:5px"></div>
<div class="h" style="left:511.70px;top:303.95px">Parameter Mapping</div>
<svg style="left:671px;top:303px;width:18px;height:18px" viewBox="0 0 18 18"><g fill="none" stroke="#151b26" stroke-width="0.8" stroke-linecap="round"><circle cx="9" cy="9" r="7.5"/><line x1="5.5" y1="9" x2="12.4" y2="9"/><line x1="9" y1="5.5" x2="9" y2="12.4"/></g></svg>
<svg style="left:704px;top:303px;width:18px;height:18px" viewBox="0 0 18 18"><g fill="none" stroke="#56698a" stroke-width="0.9" stroke-linecap="round"><line x1="4.3" y1="2.5" x2="14.9" y2="2.5"/><line x1="4.3" y1="6.4" x2="14.9" y2="6.4"/><line x1="4.3" y1="10.4" x2="6.7" y2="10.4"/><circle cx="12.5" cy="12.5" r="4.1"/><line x1="10.2" y1="12.5" x2="14.8" y2="12.5"/><line x1="12.5" y1="10.2" x2="12.5" y2="14.8"/></g><g fill="#56698a"><circle cx="1.7" cy="2.5" r=".75"/><circle cx="1.7" cy="6.4" r=".75"/><circle cx="1.7" cy="10.4" r=".75"/></g></svg>
<div class="lbl" style="left:511.60px;top:339.15px">Parameter name</div><svg style="left:621.90px;top:339.10px;width:14px;height:14px" viewBox="0 0 14 14"><g fill="none" stroke="#3b38d8" stroke-width="0.72" stroke-linecap="round"><circle cx="7" cy="7" r="5.55"/><path d="M6.1 6.3H7.1V8.8Q7.1 9.6 8 9.6"/></g><circle cx="6.9" cy="4.4" r="0.5" fill="#3b38d8"/></svg>
<div class="sel" style="left:512px;top:362.2px;width:314.60px;height:31.90px"></div><div class="lbl" style="left:522.60px;top:369.80px;color:#1f2430">name</div>
<div class="lbl" style="left:853.30px;top:339.15px;letter-spacing:0.14px">Parameter type</div><svg style="left:957.90px;top:339.10px;width:14px;height:14px" viewBox="0 0 14 14"><g fill="none" stroke="#3b38d8" stroke-width="0.72" stroke-linecap="round"><circle cx="7" cy="7" r="5.55"/><path d="M6.1 6.3H7.1V8.8Q7.1 9.6 8 9.6"/></g><circle cx="6.9" cy="4.4" r="0.5" fill="#3b38d8"/></svg>
<div class="sel" style="left:854.2px;top:362.2px;width:314.70px;height:31.90px"></div><div class="lbl" style="left:864.80px;top:369.80px;color:#4d7a22">User Input</div><div class="tri" style="left:1152.00px;top:374.85px;border-left-width:5px;border-right-width:5px;border-top-width:5px"></div>
<div class="lbl" style="left:1195.40px;top:339.15px;letter-spacing:0.06px">Form input element</div><svg style="left:1323.90px;top:339.10px;width:14px;height:14px" viewBox="0 0 14 14"><g fill="none" stroke="#3b38d8" stroke-width="0.72" stroke-linecap="round"><circle cx="7" cy="7" r="5.55"/><path d="M6.1 6.3H7.1V8.8Q7.1 9.6 8 9.6"/></g><circle cx="6.9" cy="4.4" r="0.5" fill="#3b38d8"/></svg>
<svg style="left:1196.3px;top:362.2px;width:314.3px;height:56.3px" viewBox="0 0 314.3 56.3"><rect x="1" y="1" width="312.3" height="54.3" rx="2" fill="none" stroke="#cfcfcf" stroke-width="2" stroke-dasharray="6 4"/></svg>
<svg style="left:1203px;top:382px;width:18px;height:18px" viewBox="0 0 18 18"><g fill="none" stroke="#cdcdcd" stroke-width="0.8" stroke-linecap="round"><circle cx="9" cy="9" r="7.6"/><line x1="5.5" y1="9" x2="12.5" y2="9"/><line x1="9" y1="5.5" x2="9" y2="12.5"/></g></svg>
<div class="a" style="left:1227.5px;top:375.1px;font-size:14px;line-height:16px;color:#c9c9c9;white-space:normal;width:275px;letter-spacing:.09px">Drag and drop existing form input element here</div>
<div class="lbl" style="left:1537.30px;top:339.15px">Actions</div>
<svg style="left:1537px;top:368px;width:18px;height:18px" viewBox="0 0 18 18"><g fill="none" stroke="#d62525" stroke-width="0.9" stroke-linecap="round" stroke-linejoin="round"><line x1="1.7" y1="4" x2="16.3" y2="4"/><path d="M6.4 4V2.9a1.1 1.1 0 0 1 1.1-1.1h2.9a1.1 1.1 0 0 1 1.1 1.1V4"/><path d="M3.4 4.3L4.3 14.8a1.3 1.3 0 0 0 1.3 1.1h6.7a1.3 1.3 0 0 0 1.3-1.1L14.6 4.3"/><line x1="7.5" y1="7.2" x2="7.6" y2="12.4"/><line x1="10.5" y1="7.2" x2="10.4" y2="12.4"/></g></svg>
<div class="h" style="left:511.70px;top:488.75px">Dialog Settings</div>
<div class="lbl" style="left:511.60px;top:522.95px;letter-spacing:0.07px">Dialog Type</div><svg style="left:592.90px;top:522.90px;width:14px;height:14px" viewBox="0 0 14 14"><g fill="none" stroke="#3b38d8" stroke-width="0.72" stroke-linecap="round"><circle cx="7" cy="7" r="5.55"/><path d="M6.1 6.3H7.1V8.8Q7.1 9.6 8 9.6"/></g><circle cx="6.9" cy="4.4" r="0.5" fill="#3b38d8"/></svg>
<div class="sel" style="left:512px;top:546.2px;width:656.90px;height:31.40px"></div><div class="lbl" style="left:522.60px;top:553.80px;color:#1f2430">None</div><div class="tri" style="left:1152.00px;top:558.60px;border-left-width:5px;border-right-width:5px;border-top-width:5px"></div>
<div class="h" style="left:511.70px;top:620.85px">Notifications</div>
<div class="lbl" style="left:511.60px;top:654.45px;letter-spacing:0.15px">Success notifications</div><svg style="left:652.10px;top:654.40px;width:14px;height:14px" viewBox="0 0 14 14"><g fill="none" stroke="#3b38d8" stroke-width="0.72" stroke-linecap="round"><circle cx="7" cy="7" r="5.55"/><path d="M6.1 6.3H7.1V8.8Q7.1 9.6 8 9.6"/></g><circle cx="6.9" cy="4.4" r="0.5" fill="#3b38d8"/></svg>
<div class="sel" style="left:512px;top:677.3px;width:656.90px;height:31.40px"></div><div class="lbl" style="left:522.60px;top:684.90px;color:#1f2430">None</div><div class="tri" style="left:1152.00px;top:689.70px;border-left-width:5px;border-right-width:5px;border-top-width:5px"></div>
<div class="lbl" style="left:511.60px;top:722.45px;letter-spacing:0.13px">Failure notifications</div><svg style="left:640.90px;top:722.40px;width:14px;height:14px" viewBox="0 0 14 14"><g fill="none" stroke="#3b38d8" stroke-width="0.72" stroke-linecap="round"><circle cx="7" cy="7" r="5.55"/><path d="M6.1 6.3H7.1V8.8Q7.1 9.6 8 9.6"/></g><circle cx="6.9" cy="4.4" r="0.5" fill="#3b38d8"/></svg>
<div class="sel" style="left:512px;top:745.4px;width:656.90px;height:31.30px"></div><div class="lbl" style="left:522.60px;top:753.00px;color:#1f2430">None</div><div class="tri" style="left:1152.00px;top:757.75px;border-left-width:5px;border-right-width:5px;border-top-width:5px"></div>
<div class="h" style="left:511.70px;top:819.65px">Follow-up Actions</div>
<div class="lbl" style="left:511.60px;top:854.35px;letter-spacing:0.05px">Behaviour on success</div><svg style="left:655.90px;top:854.30px;width:14px;height:14px" viewBox="0 0 14 14"><g fill="none" stroke="#3b38d8" stroke-width="0.72" stroke-linecap="round"><circle cx="7" cy="7" r="5.55"/><path d="M6.1 6.3H7.1V8.8Q7.1 9.6 8 9.6"/></g><circle cx="6.9" cy="4.4" r="0.5" fill="#3b38d8"/></svg>
<div class="sel" style="left:512px;top:876.2px;width:656.90px;height:31.30px"></div><div class="lbl" style="left:522.60px;top:883.80px;color:#1f2430">None</div><div class="tri" style="left:1152.00px;top:888.55px;border-left-width:5px;border-right-width:5px;border-top-width:5px"></div>
<div class="lbl" style="left:511.60px;top:922.55px">Behaviour on failure</div><svg style="left:642.90px;top:922.50px;width:14px;height:14px" viewBox="0 0 14 14"><g fill="none" stroke="#3b38d8" stroke-width="0.72" stroke-linecap="round"><circle cx="7" cy="7" r="5.55"/><path d="M6.1 6.3H7.1V8.8Q7.1 9.6 8 9.6"/></g><circle cx="6.9" cy="4.4" r="0.5" fill="#3b38d8"/></svg>
<div class="sel" style="left:512px;top:944.2px;width:656.90px;height:31.30px"></div><div class="lbl" style="left:522.60px;top:951.80px;color:#1f2430">None</div><div class="tri" style="left:1152.00px;top:956.55px;border-left-width:5px;border-right-width:5px;border-top-width:5px"></div>
<svg style="left:1877.5px;top:135px;width:30px;height:32.5px" viewBox="0 0 1338 1449"><g fill="none" stroke="#4b5a7a" stroke-width="58" stroke-linecap="round" stroke-linejoin="round"><path d="M255,240V330M255,450V595M255,715V870M255,990V1040Q255,1125 335,1125H390M255,520H390M520,520H665M790,520H830M520,1125H665M790,1125H830"/><path d="M885,325H1040L1125,415V630Q1125,655 1100,655H885Q860,655 860,630V350Q860,325 885,325Z"/><path d="M885,925H1040L1125,1015V1230Q1125,1255 1100,1255H885Q860,1255 860,1230V950Q860,925 885,925Z"/></g></svg>
<div class="sidelbl" style="left:1867px;width:53px;top:166.5px">Widgets</div>
<svg style="left:1877.5px;top:202.5px;width:30px;height:32.5px" viewBox="0 0 1338 1449"><g fill="none" stroke="#4b5a7a" stroke-width="60" stroke-linecap="round" stroke-linejoin="round"><ellipse cx="690" cy="378" rx="232" ry="95"/><path d="M458,378V655Q458,745 690,745Q922,745 922,655V378"/><path d="M458,440Q470,510 690,510Q910,510 922,440M458,570Q470,640 690,640Q910,640 922,570"/><path d="M255,745V700Q255,630 320,605M1125,745V700Q1125,630 1060,605"/><rect x="190" y="880" width="395" height="265" rx="25"/><rect x="793" y="880" width="400" height="265" rx="25"/><path d="M390,1145V1280M270,1280H510M995,1145V1280M870,1280H1115"/></g></svg>
<div class="sidelbl" style="left:1867px;width:53px;top:234.2px">Shared<br>Comp.</div>
<svg style="left:1870px;top:280px;width:50px;height:120px" viewBox="0 0 604 1449"><g fill="none" stroke="#4b5a7a" stroke-width="14" stroke-linecap="round" stroke-linejoin="round"><path d="M157,103H398Q420,103 416,125L380,362Q376,380 358,380H200Q182,380 178,362L140,125Q136,103 157,103Z"/><path d="M212,218Q230,165 285,163Q330,163 355,205M355,178V225H312"/><path d="M355,262Q335,318 282,320Q232,320 212,277M212,305V258H255"/></g></svg>
<div class="sidelbl" style="left:1867px;width:53px;top:314.6px">Recycle<br>Bin</div>
<svg style="left:1870px;top:280px;width:50px;height:120px" viewBox="0 0 604 1449"><g fill="none" stroke="#4b5a7a" stroke-width="14" stroke-linecap="round" stroke-linejoin="round"><rect x="142" y="1072" width="271" height="215" rx="22"/><path d="M142,1250H413M285,1072V1250M245,1290L232,1335M320,1290L332,1335M215,1340H340"/><path d="M177,1125H198M222,1125H255M177,1160H208M228,1160H255M177,1195H255"/><path d="M290,1215Q340,1140 410,1195"/></g><circle cx="333" cy="1123" r="13" fill="#4b5a7a"/></svg>
<div class="sidelbl" style="left:1867px;width:53px;top:394.3px">Preview</div>
<svg style="left:1881px;top:436px;width:24px;height:24px" viewBox="0 0 24 24"><g fill="none" stroke="#4b5a7a" stroke-width="2.4" stroke-linecap="round"><circle cx="10.7" cy="10.7" r="7"/><line x1="16" y1="16" x2="20.2" y2="20.2"/></g></svg>
<div class="sidelbl" style="left:1867px;width:53px;top:462.4px">Search</div>
<div class="a" style="left:1646.9px;top:1060.2px;font-size:10.5px;line-height:12px;color:#8e8e8e">Structr 6.1-SNAPSHOT build <span style="color:#56698a;text-decoration:underline">8d731</span> (202601220826)</div>
</div><script>(function(){var w=window.innerWidth;if(w>0){document.getElementById("root").style.zoom=(w/1920);}})();</script></body></html>
